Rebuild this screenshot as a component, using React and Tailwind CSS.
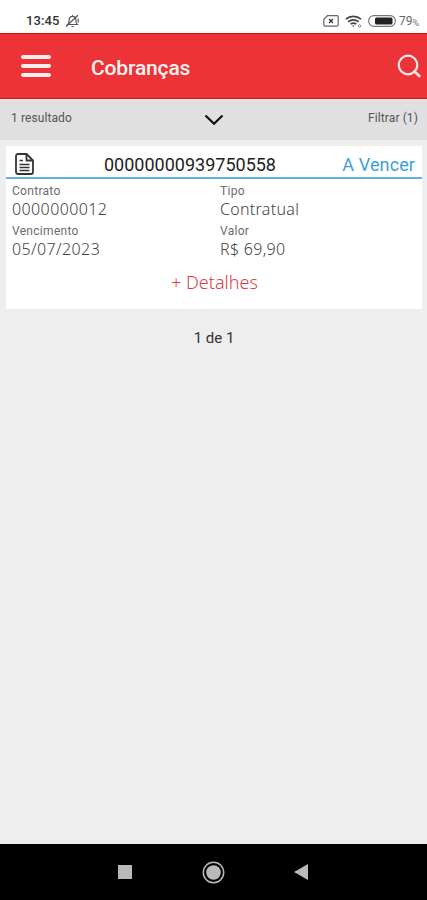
import React from "react";

const fields = [
    { label: "Contrato", value: "0000000012", spacing: "tracking-[0.4px]" },
    { label: "Tipo", value: "Contratual", spacing: "tracking-[0.3px]" },
    { label: "Vencimento", value: "05/07/2023", spacing: "tracking-[0.4px]" },
    { label: "Valor", value: "R$ 69,90", spacing: "tracking-[0.3px]" },
];

const StatusBar = () => (
    <div className="h-[33px] shrink-0 bg-white flex items-center justify-between pl-[26px] pr-2 pt-[9px]">
        <div className="flex items-center gap-[6px]">
            <span className="text-[13px] leading-4 font-medium text-[#333] tracking-[0.1px]">13:45</span>
            {/* Muted bell */}
            <svg width="15" height="14" viewBox="0 0 15 14" fill="none" stroke="#555" strokeWidth="1.2">
                <path d="M2.8 10.5c1.4-1.2 1.2-2.6 1.3-4.4C4.3 3.6 5.6 2.3 7.5 2.3s3.3 1.3 3.4 3.8c.1 1.8 0 3.2 1.4 4.4zM6.5 12.500h2.200M7.500 1v1.300" />
                <path d="M1 12.500 13 1.200M13.200 4.500v4" />
            </svg>
        </div>
        <div className="flex items-center">
            <svg className="mr-[6px]" width="16" height="12" viewBox="0 0 16 12" fill="none" stroke="#666" strokeWidth="1.2">
                <path d="M4.500.7H14a1.200 1.200 0 0 1 1.200 1.200v8a1.200 1.200 0 0 1-1.200 1.200H2A1.200 1.200 0 0 1 .8 9.900V4.200z" />
                <path d="m6 4 4 4M10 4 6 8" stroke="#333" strokeWidth="1.300" />
            </svg>
            <svg className="mr-[6px]" width="17" height="13" viewBox="0 0 17 13" fill="none" stroke="#444" strokeWidth="1.700">
                <path d="M.8 4.200c4.300-3.700 10.900-3.700 15.200 0M3.200 6.800c3-2.600 7.400-2.600 10.400 0M5.600 9.200c1.700-1.400 4-1.400 5.700 0" />
                <path d="m7 10.400 1.400 1.500 1.400-1.500z" fill="#444" stroke="none" />
                <circle cx="14.500" cy="11" r="1.200" stroke="#888" strokeWidth="1" />
            </svg>
            <svg className="mr-[3px]" width="28" height="12" viewBox="0 0 28 12">
                <rect x=".7" y=".7" width="26.600" height="10.600" rx="5" fill="none" stroke="#777" strokeWidth="1.200" />
                <rect x="7" y="2.500" width="17.500" height="7" rx="1.500" fill="#222" />
            </svg>
            <span className="text-[12px] leading-4 text-[#666]">79</span>
            <span className="text-[9px] leading-4 pt-[3px] text-[#777]">%</span>
        </div>
    </div>
);

const Header = () => (
    <header className="h-[66px] shrink-0 bg-[#ec3338] border-y border-[#d9121c] flex items-center pl-[21px] pr-[6px]">
        <div className="w-[30px] flex flex-col gap-[5px]">
            <div className="h-1 rounded-full bg-[#ffeceb]" />
            <div className="h-1 rounded-full bg-[#ffeceb]" />
            <div className="h-1 rounded-full bg-[#ffeceb]" />
        </div>
        <h1 className="ml-10 pt-[3px] text-[21px] leading-6 font-medium tracking-[-0.15px] text-[#fff3f2]">Cobranças</h1>
        <svg className="ml-auto" width="24" height="24" viewBox="0 0 24 24" fill="none" stroke="#ffe9e8" strokeWidth="2.200">
            <circle cx="11" cy="11" r="9.300" />
            <path d="m17.500 17.500 4.800 4.500" strokeWidth="2.600" strokeLinecap="round" />
        </svg>
    </header>
);

const FilterBar = () => (
    <div className="h-[41px] shrink-0 bg-[#e0e0e0] grid grid-cols-3 items-center pl-[11px] pr-[9px] pb-[3px] text-[12px] leading-4 tracking-[0.1px] text-[#555]">
        <span>1 resultado</span>
        <svg className="justify-self-center mt-1" width="20" height="12" viewBox="0 0 20 12" fill="none" stroke="#111" strokeWidth="2.200">
            <path d="m1.500 1.500 8.500 8.300 8.500-8.300" />
        </svg>
        <span className="justify-self-end">Filtrar (1)</span>
    </div>
);

const ChargeCard = () => (
    <section className="ml-[6px] mr-[5px] mt-[6px] h-[163px] shrink-0 bg-white">
        <div className="h-[33px] border-b-2 border-[#62b2df] flex items-center pl-[9px] pr-[7px] pt-[6px]">
            <svg className="-mt-[1px]" width="19" height="22" viewBox="0 0 19 22" fill="none" stroke="#333" strokeWidth="1.800" strokeLinejoin="round">
                <path d="M3 1h8.500L18 7.500V19a2 2 0 0 1-2 2H3a2 2 0 0 1-2-2V3a2 2 0 0 1 2-2z" />
                <path d="M11.500 1v6.500H18" />
                <path d="M4.500 7.500H8M4.500 11.500h10M4.500 14.500h10M4.500 17.500h10" strokeWidth="1.300" />
            </svg>
            <span className="ml-[70px] text-[18px] leading-5 text-[#222]">00000000939750558</span>
            <span className="ml-auto text-[18px] leading-5 tracking-[0.1px] text-[#3d9fda] whitespace-nowrap">A Vencer</span>
        </div>
        <div className="grid grid-cols-2 px-[6px] pt-[5px]">
            {fields.map((field) => (
                <div key={field.label} className="h-10 even:pl-[6px]">
                    <div className="text-[12px] leading-[15px] tracking-[0.3px] text-[#6c6c6c]">{field.label}</div>
                    <div className={`font-['Noto_Sans'] font-light text-[16px] leading-5 text-[#444] ${field.spacing}`}>
                        {field.value}
                    </div>
                </div>
            ))}
        </div>
        <div className="pl-[1px] text-center font-['Noto_Sans'] font-light text-[18px] leading-6 text-[#d83d4b] mt-[6px]">
            + Detalhes
        </div>
    </section>
);

const NavBar = () => (
    <nav className="h-14 shrink-0 mt-auto bg-black flex items-center">
        <svg className="ml-[118px]" width="14" height="14" viewBox="0 0 14 14">
            <path d="M0 0h14v14H0z" fill="#b9b9b9" />
        </svg>
        <svg className="ml-[70px]" width="23" height="23" viewBox="0 0 23 23">
            <circle cx="11.500" cy="11.500" r="10.200" fill="none" stroke="#b9b9b9" strokeWidth="1.500" />
            <circle cx="11.500" cy="11.500" r="7.300" fill="#b9b9b9" />
        </svg>
        <svg className="ml-[69px]" width="14" height="16" viewBox="0 0 14 16">
            <path d="M14 0v16L0 8z" fill="#b9b9b9" />
        </svg>
    </nav>
);

const App = () => {
    return (
        <div className="h-screen w-full flex flex-col bg-[#eeeeee] font-['Roboto',sans-serif] overflow-hidden">
            <StatusBar />
            <Header />
            <FilterBar />
            <ChargeCard />
            <p className="mt-[19px] pl-[1px] text-center text-[15px] leading-5 text-[#333]">1 de 1</p>
            <NavBar />
        </div>
    );
};

export default App;
